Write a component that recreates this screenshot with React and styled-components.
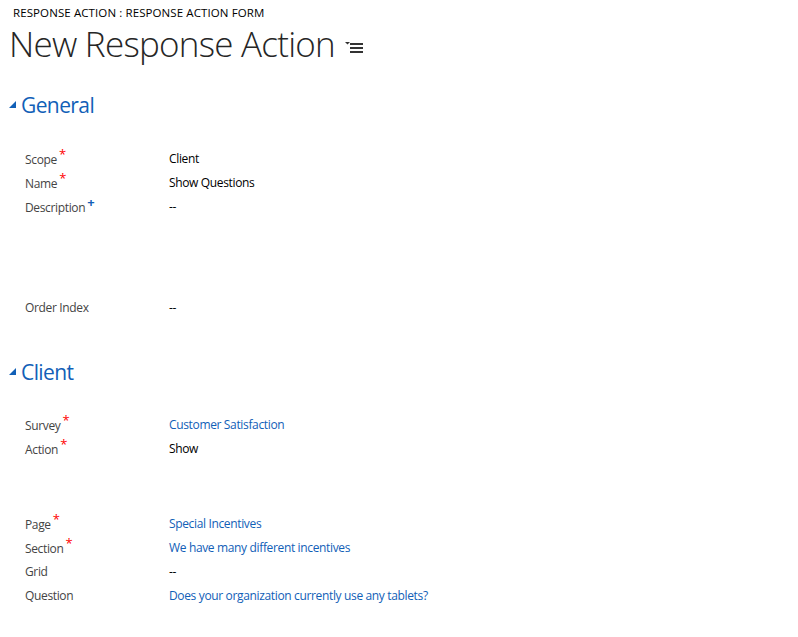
import React from "react";
import styled, { createGlobalStyle } from "styled-components";

const Global = createGlobalStyle`
  html, body { margin: 0; padding: 0; background: #fff; }
  body { font-family: "Segoe UI", "Open Sans", "Noto Sans", sans-serif; color: #444; }
`;

const Page = styled.div`
  width: 798px;
  height: 637px;
  overflow: hidden;
  display: flex;
  flex-direction: column;
`;

const Header = styled.header`
  padding: 6px 0 0 9px;
  display: flex;
  flex-direction: column;
`;

const EntityName = styled.div`
  font-size: 11.5px;
  letter-spacing: 0.1px;
  color: #000;
  padding-left: 4px;
  line-height: 14px;
`;

const TitleRow = styled.div`
  display: flex;
  align-items: center;
  gap: 10px;
  margin-top: 1px;
`;

const Title = styled.h1`
  margin: 0;
  font-size: 35px;
  font-weight: 300;
  color: #262626;
  line-height: 46px;
  letter-spacing: -0.75px;
`;

const MenuIcon = styled.svg`
  width: 18px;
  height: 12px;
  margin-top: 6px;
`;

const Section = styled.section`
  display: flex;
  flex-direction: column;
  margin-top: ${(p) => p.mt}px;
`;

const SectionHead = styled.h2`
  margin: 0;
  display: flex;
  align-items: center;
  gap: 4px;
  padding-left: 9px;
  font-size: 21px;
  letter-spacing: -0.6px;
  font-weight: 400;
  color: #1160b7;
  line-height: 30px;
`;

const Fields = styled.div`
  display: flex;
  flex-direction: column;
  padding-left: 25px;
`;

const Row = styled.div`
  display: grid;
  grid-template-columns: 144px 1fr;
  height: ${(p) => p.h || 24}px;
  font-size: 12px;
  letter-spacing: -0.35px;
  line-height: 24px;
`;

const Label = styled.div`
  color: #444;
`;

const Mark = styled.span`
  color: ${(p) => (p.rec ? "#1160b7" : "#f00")};
  font-size: 13px;
  font-weight: ${(p) => (p.rec ? 700 : 400)};
  position: relative;
  top: -5px;
  margin-left: 2px;
`;

const Value = styled.div`
  color: ${(p) => (p.link ? "#1160b7" : "#000")};
`;

const Spacer = styled.div`
  height: ${(p) => p.h}px;
`;

const Triangle = () => (
  <svg width="8" height="8" viewBox="0 0 8 8">
    <polygon points="7,0 7,7 0,7" fill="#1160b7" />
  </svg>
);

const Field = ({ label, mark, value, link, h }) => (
  <Row h={h}>
    <Label>
      {label}
      {mark === "req" && <Mark>*</Mark>}
      {mark === "rec" && <Mark rec>+</Mark>}
    </Label>
    <Value link={link}>{value}</Value>
  </Row>
);

export default function App() {
  return (
    <Page>
      <Global />
      <Header>
        <EntityName>RESPONSE ACTION : RESPONSE ACTION FORM</EntityName>
        <TitleRow>
          <Title>New Response Action</Title>
          <MenuIcon viewBox="0 0 18 12">
            <polygon points="0,1 5,1 2.5,3.5" fill="#333" />
            <rect x="5" y="2" width="13" height="2" fill="#333" />
            <rect x="5" y="6" width="13" height="2" fill="#333" />
            <rect x="5" y="10" width="13" height="2" fill="#333" />
          </MenuIcon>
        </TitleRow>
      </Header>

      <Section mt={23}>
        <SectionHead>
          <Triangle />
          General
        </SectionHead>
        <Spacer h={27} />
        <Fields>
          <Field label="Scope" mark="req" value="Client" />
          <Field label="Name" mark="req" value="Show Questions" />
          <Field label="Description" mark="rec" value="--" h={101} />
          <Field label="Order Index" value="--" />
        </Fields>
      </Section>

      <Section mt={37}>
        <SectionHead>
          <Triangle />
          Client
        </SectionHead>
        <Spacer h={26} />
        <Fields>
          <Field label="Survey" mark="req" value="Customer Satisfaction" link />
          <Field label="Action" mark="req" value="Show" />
          <Spacer h={51} />
          <Field label="Page" mark="req" value="Special Incentives" link />
          <Field label="Section" mark="req" value="We have many different incentives" link />
          <Field label="Grid" value="--" />
          <Field label="Question" value="Does your organization currently use any tablets?" link />
        </Fields>
      </Section>
    </Page>
  );
}
